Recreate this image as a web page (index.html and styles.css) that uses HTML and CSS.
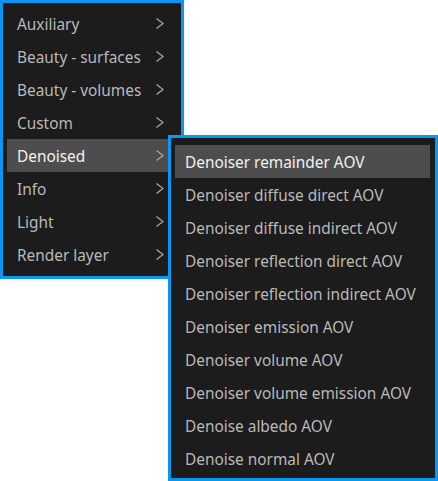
FILE: index.html
```html
<!DOCTYPE html>
<html>
<head>
<meta charset="utf-8">
<link rel="stylesheet" href="styles.css">
</head>
<body>
<div class="menu">
  <div class="item"><span>Auxiliary</span><svg class="chev" width="8" height="11" viewBox="0 0 8 11"><polyline points="0.5,0.5 7,5.5 0.5,10.5"/></svg></div>
  <div class="item"><span>Beauty - surfaces</span><svg class="chev" width="8" height="11" viewBox="0 0 8 11"><polyline points="0.5,0.5 7,5.5 0.5,10.5"/></svg></div>
  <div class="item"><span>Beauty - volumes</span><svg class="chev" width="8" height="11" viewBox="0 0 8 11"><polyline points="0.5,0.5 7,5.5 0.5,10.5"/></svg></div>
  <div class="item"><span>Custom</span><svg class="chev" width="8" height="11" viewBox="0 0 8 11"><polyline points="0.5,0.5 7,5.5 0.5,10.5"/></svg></div>
  <div class="item active"><span>Denoised</span><svg class="chev" width="8" height="11" viewBox="0 0 8 11"><polyline points="0.5,0.5 7,5.5 0.5,10.5"/></svg></div>
  <div class="item"><span>Info</span><svg class="chev" width="8" height="11" viewBox="0 0 8 11"><polyline points="0.5,0.5 7,5.5 0.5,10.5"/></svg></div>
  <div class="item"><span>Light</span><svg class="chev" width="8" height="11" viewBox="0 0 8 11"><polyline points="0.5,0.5 7,5.5 0.5,10.5"/></svg></div>
  <div class="item"><span>Render layer</span><svg class="chev" width="8" height="11" viewBox="0 0 8 11"><polyline points="0.5,0.5 7,5.5 0.5,10.5"/></svg></div>
</div>
<div class="menu submenu">
  <div class="item active"><span>Denoiser remainder AOV</span></div>
  <div class="item"><span>Denoiser diffuse direct AOV</span></div>
  <div class="item"><span>Denoiser diffuse indirect AOV</span></div>
  <div class="item"><span>Denoiser reflection direct AOV</span></div>
  <div class="item"><span>Denoiser reflection indirect AOV</span></div>
  <div class="item"><span>Denoiser emission AOV</span></div>
  <div class="item"><span>Denoiser volume AOV</span></div>
  <div class="item"><span>Denoiser volume emission AOV</span></div>
  <div class="item"><span>Denoise albedo AOV</span></div>
  <div class="item"><span>Denoise normal AOV</span></div>
</div>
</body>
</html>
```
FILE: styles.css
```css
html, body {
  margin: 0;
  padding: 0;
  background: #ffffff;
}
body {
  position: relative;
  width: 438px;
  height: 481px;
  font-family: "Noto Sans", "Open Sans", sans-serif;
  font-size: 15.4px;
}
.menu {
  box-sizing: border-box;
  width: 184px;
  height: 279px;
  background: #1c1c1c;
  border: 3px solid #0a96f3;
  padding: 4px 4px 5px 4px;
  display: flex;
  flex-direction: column;
}
.item {
  height: 33px;
  flex: none;
  display: flex;
  align-items: center;
  justify-content: space-between;
  padding: 0 13px 0 10px;
  color: #b9b9b9;
  white-space: nowrap;
  line-height: 1;
}
.item span {
  position: relative;
  top: 1px;
}
.item.active {
  background: #4d4d4d;
  color: #f2f2f2;
}
.chev {
  fill: none;
  stroke: #a8a8a8;
  stroke-width: 1.2;
}
.submenu {
  position: absolute;
  left: 168px;
  top: 135px;
  width: 270px;
  height: 346px;
  padding: 7px 5px 3px 4px;
}
```
